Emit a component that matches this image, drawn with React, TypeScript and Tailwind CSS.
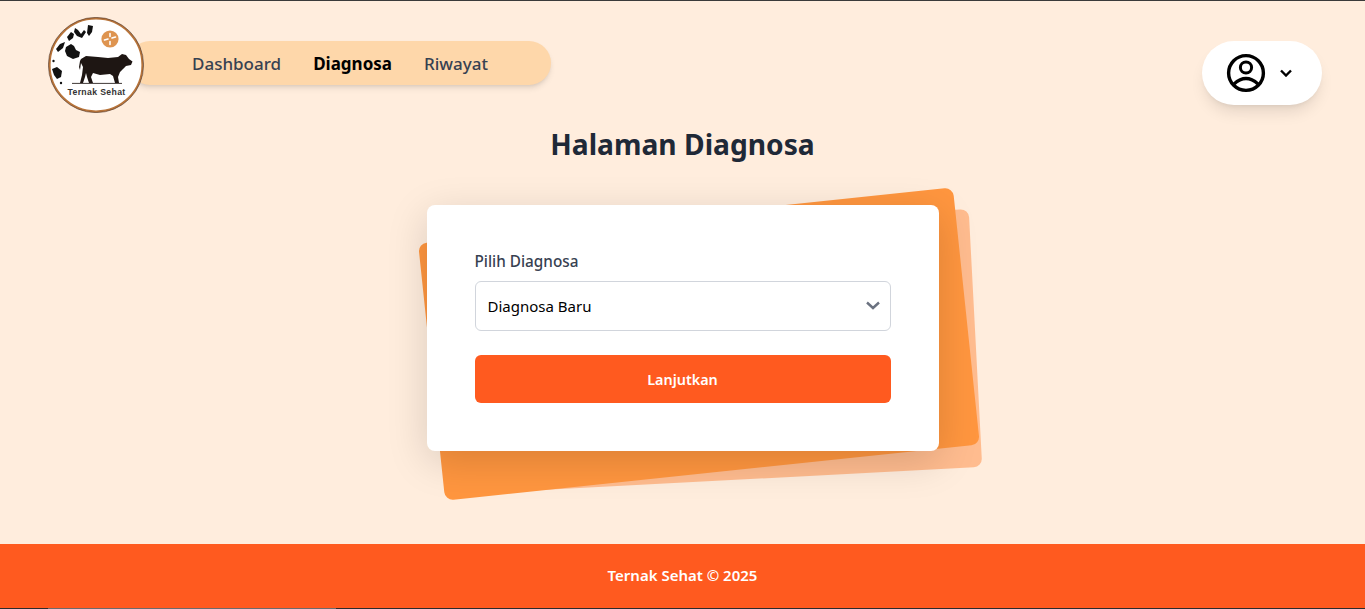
function Logo() {
  return (
    <div className="relative z-10 h-24 w-24 shrink-0 rounded-full bg-white">
      <svg viewBox="0 0 96 96" className="h-24 w-24">
        <circle cx="48" cy="48" r="46.4" fill="#fff" stroke="#b8743a" strokeWidth="2" />
        <circle cx="48" cy="48" r="47.6" fill="none" stroke="#5c3a22" strokeWidth="0.7" />
        {/* sapi spots */}
        <g fill="#111">
          <path d="M18 30 23 27 26 29 28 33 32 35 31 40 25 42 19 39 17 34Z" />
          <path d="M19 20 23 15 26 17 25 21 21 24Z" />
          <path d="M27 11 30 13 33 17 36 13 38 15 34 21 29 19 26 15Z" />
          <path d="M39 16 40 8 45 9 44 15 41 19Z" />
          <path d="M8 32 12 27 17 25 15 31 10 35Z" />
          <path d="M4 52 9 50 14 54 13 60 9 62 6 58Z" />
          <circle cx="5.5" cy="44" r="1.2" />
          <circle cx="13" cy="66" r="1.2" />
        </g>
        {/* badge */}
        <circle cx="62" cy="22" r="8.6" fill="#de9450" />
        <g stroke="#fff" strokeWidth="1.6" strokeLinecap="round">
          <path d="M62 16.5V19.5M62 24.5V27.5M56.5 23 60 22M64 21 67.5 20" />
        </g>
        {/* sapi */}
        <path
          d="M33 42 38 39 50 40 60 41 70 40 74 37 78 38 81 42 84.5 44.5 83 48 78 49 75 52 72 55 70 60 71 66 67 66 65 59 62 57 52 58 45 56 43 60 45 66 41 66 39 60 38 56 37 60 35 66 32 66 34 58 35 50 33 46 32 53 31 50 32 44Z"
          fill="#1e1613"
        />
        <path d="M24 66.4H74" stroke="#2a2320" strokeWidth="0.9" />
        <text
          x="48.5"
          y="78"
          textAnchor="middle"
          fontSize="8.7"
          fontWeight="700"
          letterSpacing="0.35"
          fill="#333"
          fontFamily="'Liberation Sans', sans-serif"
        >
          Ternak Sehat
        </text>
      </svg>
    </div>
  );
}

export default function App() {
  return (
    <div className="flex h-screen flex-col overflow-hidden bg-[#ffeddd] font-['Noto_Sans',sans-serif]">
      <div className="h-px shrink-0 bg-[#3a3a3a]" />
      <header className="flex h-[123px] shrink-0 items-start justify-between pl-12 pr-[43px] pt-4">
        <div className="flex items-start">
          <Logo />
          <nav className="-ml-4 mt-6 flex h-11 items-center gap-8 rounded-full bg-[#fed7aa] pl-16 pr-[63px] pt-0.5 text-[17px] shadow-md">
            <a className="font-medium text-[#374151]">Dashboard</a>
            <a className="font-bold text-black">Diagnosa</a>
            <a className="font-medium text-[#374151]">Riwayat</a>
          </nav>
        </div>
        <button className="mt-6 flex h-16 w-[120px] items-center gap-3.5 rounded-full bg-white pl-6 text-black shadow-lg">
          <svg viewBox="0 0 40 40" className="h-10 w-10" fill="none" stroke="currentColor">
            <circle cx="20" cy="20" r="17.4" strokeWidth="3.4" />
            <circle cx="20" cy="14.5" r="5.6" strokeWidth="3" />
            <path d="M8 31Q20 20 32 31" strokeWidth="3.2" />
          </svg>
          <svg viewBox="0 0 12 8" className="h-2 w-3" fill="none" stroke="currentColor" strokeWidth="2.4">
            <path d="M1 1.5 6 6.5 11 1.5" />
          </svg>
        </button>
      </header>

      <main className="flex flex-1 flex-col items-center">
        <h1 className="text-[28.2px] font-bold leading-10 text-[#1f2937]">Halaman Diagnosa</h1>
        <div className="relative mt-[41px] w-[512px]">
          <div className="absolute inset-0 translate-x-6 translate-y-6 -rotate-3 scale-105 rounded-lg bg-[#ff8c42] opacity-50" />
          <div className="absolute inset-0 translate-x-4 translate-y-4 -rotate-6 scale-105 rounded-lg bg-[#ff963f]" />
          <div className="relative rounded-lg bg-white p-12 shadow-[0_10px_40px_rgba(0,0,0,0.15)]">
            <label className="mb-[9px] -mt-0.5 block text-[15.3px] font-medium leading-[21px] text-[#374151]">
              Pilih Diagnosa
            </label>
            <div className="relative mb-6">
              <select className="block h-[50px] w-full appearance-none rounded-md border border-gray-300 bg-white px-3 text-[15px] text-black">
                <option>Diagnosa Baru</option>
              </select>
              <svg
                viewBox="0 0 14 9"
                className="pointer-events-none absolute right-[11px] top-[20px] h-[9px] w-[14px]"
                fill="none"
                stroke="#6b7280"
                strokeWidth="2.4"
              >
                <path d="M1 1.5 7 7 13 1.5" />
              </svg>
            </div>
            <button className="h-12 w-full rounded-md bg-[#ff5a1f] pt-0.5 text-[14.4px] font-semibold text-white">
              Lanjutkan
            </button>
          </div>
        </div>
      </main>

      <footer className="flex h-16 shrink-0 items-center justify-center bg-[#ff5a1f] pb-0.5 text-[15px] font-semibold text-white">
        Ternak Sehat © 2025
      </footer>
      <div className="flex h-px shrink-0 bg-[#2b2b2b]">
        <div className="ml-12 w-72 bg-[#6b6b6b]" />
      </div>
    </div>
  );
}
